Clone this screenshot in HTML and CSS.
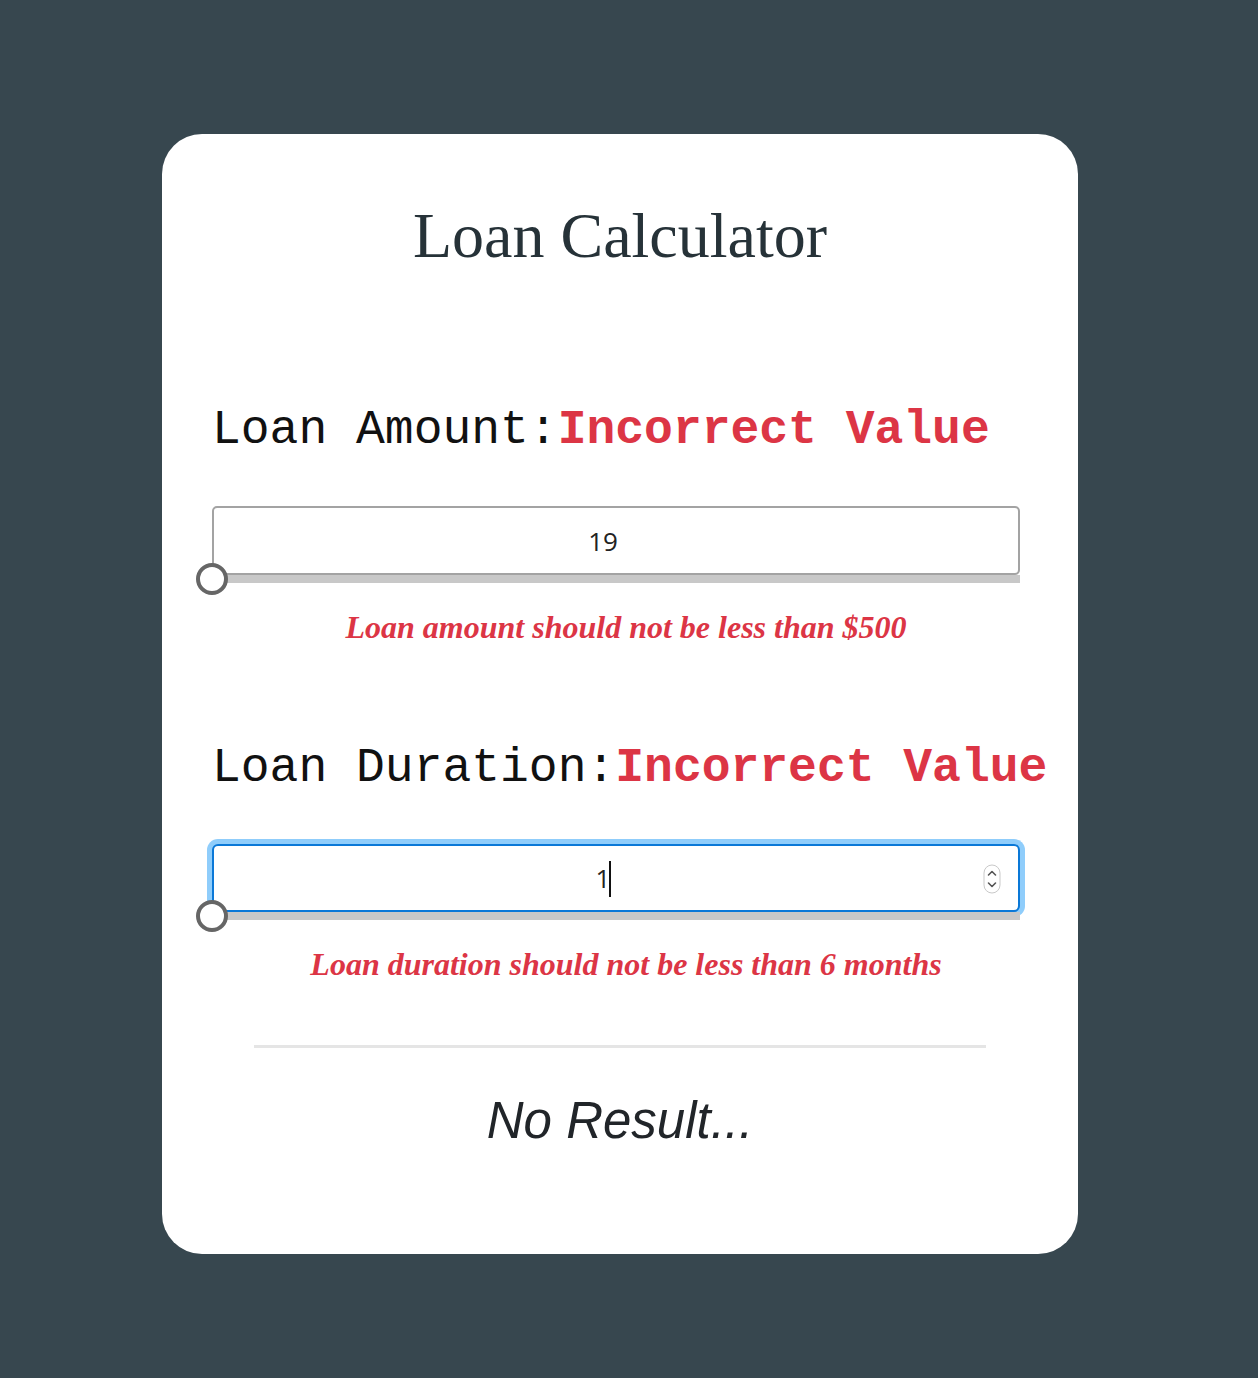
FILE: index.html
```html
<!DOCTYPE html>
<html lang="en">
<head>
<meta charset="utf-8">
<title>Loan Calculator</title>
<link rel="stylesheet" href="styles.css">
</head>
<body>
<main class="card">
  <h1 class="title">Loan Calculator</h1>

  <section class="field field-first">
    <label class="label" for="amount">Loan Amount:<span class="bad">Incorrect Value</span></label>
    <div class="control">
      <input id="amount" class="num" type="text" value="19">
      <div class="track"><span class="thumb"></span></div>
    </div>
    <p class="error">Loan amount should not be less than $500</p>
  </section>

  <section class="field field-second">
    <label class="label" for="duration">Loan Duration:<span class="bad">Incorrect Value</span></label>
    <div class="control">
      <input id="duration" class="num num-focus" type="text" value="1">
      <span class="caret"></span>
      <svg class="spinner" width="18" height="30" viewBox="0 0 18 30">
        <rect x="1" y="1" width="16" height="28" rx="8" fill="#fff" stroke="#c9c9c9" stroke-width="1"/>
        <path d="M5.5 11 L9 7.5 L12.5 11" fill="none" stroke="#555" stroke-width="1.6" stroke-linecap="round" stroke-linejoin="round"/>
        <path d="M5.5 19 L9 22.5 L12.5 19" fill="none" stroke="#555" stroke-width="1.6" stroke-linecap="round" stroke-linejoin="round"/>
      </svg>
      <div class="track"><span class="thumb"></span></div>
    </div>
    <p class="error">Loan duration should not be less than 6 months</p>
  </section>

  <hr class="divider">
  <p class="result">No Result...</p>
</main>
</body>
</html>
```

FILE: styles.css
```css
* { box-sizing: border-box; }

html, body {
  margin: 0;
  padding: 0;
}

body {
  background: #37474f;
  min-height: 1378px;
  padding-top: 134px;
  padding-left: 162px;
}

.card {
  width: 916px;
  height: 1120px;
  background: #ffffff;
  border-radius: 40px;
  padding-top: 70px;
  display: flex;
  flex-direction: column;
}

.title {
  margin: 0;
  font-family: "Liberation Serif", "Times New Roman", serif;
  font-weight: normal;
  font-size: 64px;
  line-height: 64px;
  color: #263238;
  text-align: center;
}

.field {
  margin-left: 50px;
  width: 808px;
}

.field-first { margin-top: 138px; }
.field-second { margin-top: 101px; }

.label {
  display: block;
  font-family: "Liberation Mono", "Courier New", monospace;
  font-size: 48px;
  line-height: 48px;
  color: #111111;
  white-space: nowrap;
}

.bad {
  color: #dc3545;
  font-weight: bold;
}

.control {
  position: relative;
  margin-top: 52px;
}

.num {
  display: block;
  width: 808px;
  height: 69px;
  margin: 0;
  border: 2px solid #a3a3a3;
  border-radius: 5px;
  background: #fff;
  padding: 0 26px 0 0;
  font-family: "Open Sans", "Noto Sans", sans-serif;
  font-size: 26px;
  color: #222;
  text-align: center;
  outline: none;
}

.num-focus {
  height: 68px;
  border-color: #0a78d7;
  border-radius: 6px;
  box-shadow: 0 0 0 5px #8fcdfb;
}

.caret {
  position: absolute;
  left: 397px;
  top: 17px;
  width: 2px;
  height: 36px;
  background: #111;
}

.spinner {
  position: absolute;
  right: 19px;
  top: 20px;
}

.track {
  position: relative;
  height: 8px;
  background: #c8c8c8;
}

.thumb {
  position: absolute;
  left: -16px;
  top: -12px;
  width: 32px;
  height: 32px;
  border-radius: 50%;
  border: 4px solid #666666;
  background: #ffffff;
}

.error {
  width: 828px;
  margin: 28px 0 0 0;
  font-family: "Liberation Serif", "Times New Roman", serif;
  font-style: italic;
  font-weight: bold;
  font-size: 32px;
  line-height: 32px;
  color: #dc3545;
  text-align: center;
}

.divider {
  width: 732px;
  height: 3px;
  margin: 65px auto 0 auto;
  border: 0;
  background: #e5e5e5;
}

.result {
  margin: 47px 0 0 0;
  font-family: "Liberation Sans", Arial, sans-serif;
  font-style: italic;
  font-size: 51px;
  line-height: 51px;
  color: #212529;
  text-align: center;
}
```
